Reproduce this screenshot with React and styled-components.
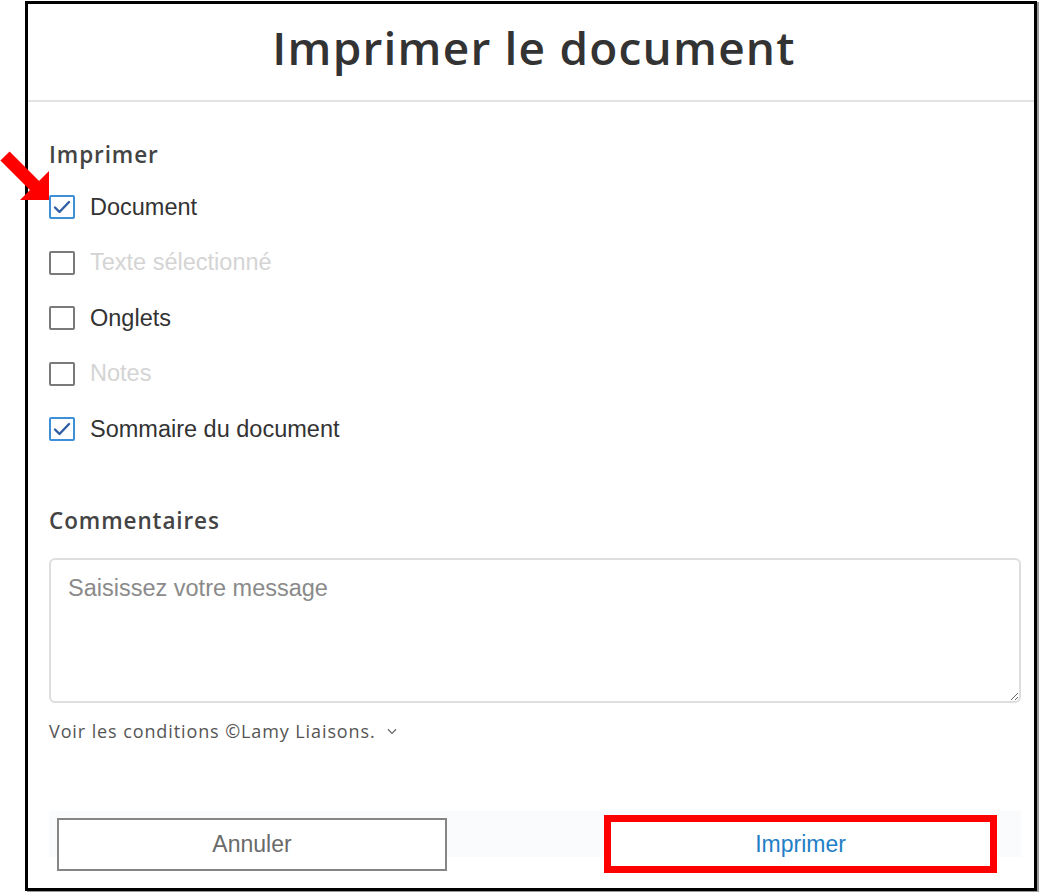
import React from "react";
import styled, { createGlobalStyle } from "styled-components";

const GlobalStyle = createGlobalStyle`
  html, body {
    margin: 0;
    padding: 0;
    background: #ffffff;
  }
  body {
    font-family: "Liberation Sans", Arial, sans-serif;
  }
`;

const Page = styled.div`
  position: relative;
  width: 1039px;
  height: 892px;
  padding: 1px 0 0 25px;
  box-sizing: border-box;
`;

const Frame = styled.div`
  width: 1012px;
  height: 890px;
  box-sizing: border-box;
  border: 3px solid #000;
  box-shadow: 2px 1px 0 #9a9a9a;
  display: flex;
  flex-direction: column;
  background: #fff;
`;

const Header = styled.div`
  height: 96px;
  border-bottom: 2px solid #e3e3e3;
  display: flex;
  align-items: center;
  justify-content: center;
`;

const Title = styled.h1`
  margin: -10px 0 0 6px;
  font-family: "Open Sans", "Noto Sans", sans-serif;
  font-weight: 600;
  font-size: 46px;
  color: #333;
  letter-spacing: 1.2px;
`;

const Body = styled.div`
  flex: 1;
  padding: 39px 13px 15px 21px;
  display: flex;
  flex-direction: column;
`;

const SectionLabel = styled.div`
  font-family: "Open Sans", "Noto Sans", sans-serif;
  font-weight: 600;
  font-size: 22.5px;
  line-height: 28px;
  letter-spacing: 0.9px;
  color: #444;
  margin-top: ${(p) => p.$top || 0}px;
`;

const Options = styled.div`
  margin-top: 11px;
  display: flex;
  flex-direction: column;
`;

const Row = styled.label`
  height: 55.5px;
  display: flex;
  align-items: center;
  gap: 15px;
`;

const Box = styled.span`
  width: 26px;
  height: 24px;
  box-sizing: border-box;
  border: 2px solid ${(p) => (p.$checked ? "#3d8fd8" : "#7a7a7a")};
  border-radius: 2px;
  display: flex;
  align-items: center;
  justify-content: center;
  flex-shrink: 0;
`;

const OptionText = styled.span`
  font-size: 23.5px;
  color: ${(p) => (p.$disabled ? "#d4d4d4" : "#333")};
  margin-top: 0;
`;

const Comment = styled.textarea`
  margin-top: 23px;
  height: 145px;
  box-sizing: border-box;
  border: 2px solid #dedede;
  border-radius: 6px;
  padding: 15px 17px;
  font-family: "Liberation Sans", Arial, sans-serif;
  font-size: 23.5px;
  color: #333;
  resize: vertical;
  outline: none;
  &::placeholder {
    color: #8a8a8a;
  }
`;

const Terms = styled.div`
  margin-top: 17px;
  display: flex;
  align-items: center;
  gap: 9px;
  font-family: "Open Sans", "Noto Sans", sans-serif;
  font-size: 18px;
  line-height: 22px;
  letter-spacing: 0.9px;
  color: #555;
`;

const Footer = styled.div`
  margin-top: 69px;
  padding: 4px 0 0 8px;
  height: 58px;
  display: flex;
  align-items: center;
  gap: 157px;
  background: linear-gradient(#f9fbfc 0, #f9fbfc 46px, #fff 46px);
`;

const Button = styled.button`
  width: ${(p) => (p.$primary ? 393 : 390)}px;
  height: ${(p) => (p.$primary ? 58 : 53)}px;
  box-sizing: border-box;
  background: #fff;
  border: ${(p) => (p.$primary ? "7px solid #ff0000" : "2px solid #858585")};
  font-family: "Liberation Sans", Arial, sans-serif;
  font-size: 23px;
  color: ${(p) => (p.$primary ? "#1f7fc6" : "#6a6a6a")};
  cursor: pointer;
`;

const Arrow = styled.svg`
  position: absolute;
  left: 0;
  top: 150px;
`;

const Check = () => (
  <svg width="18" height="14" viewBox="0 0 18 14">
    <path
      d="M2 7.5 L6.5 12 L16 2"
      fill="none"
      stroke="#2e5fa6"
      strokeWidth="2.4"
      strokeLinecap="round"
      strokeLinejoin="round"
    />
  </svg>
);

const options = [
  { label: "Document", checked: true },
  { label: "Texte sélectionné", disabled: true },
  { label: "Onglets" },
  { label: "Notes", disabled: true },
  { label: "Sommaire du document", checked: true },
];

const App = () => {
  return (
    <Page>
      <GlobalStyle />
      <Frame>
        <Header>
          <Title>Imprimer le document</Title>
        </Header>
        <Body>
          <SectionLabel>Imprimer</SectionLabel>
          <Options>
            {options.map((o) => (
              <Row key={o.label}>
                <Box $checked={o.checked}>{o.checked && <Check />}</Box>
                <OptionText $disabled={o.disabled}>{o.label}</OptionText>
              </Row>
            ))}
          </Options>
          <SectionLabel $top={50}>Commentaires</SectionLabel>
          <Comment placeholder="Saisissez votre message" />
          <Terms>
            Voir les conditions ©Lamy Liaisons.
            <svg width="14" height="14" viewBox="0 0 24 24">
              <path d="M5 9l7 7 7-7" fill="none" stroke="#666" strokeWidth="2" />
            </svg>
          </Terms>
          <Footer>
            <Button>Annuler</Button>
            <Button $primary>Imprimer</Button>
          </Footer>
        </Body>
      </Frame>
      <Arrow width="52" height="52" viewBox="0 0 52 52">
        <polygon points="9.6,1.4 39.6,31.4 30.4,40.6 0.4,10.6" fill="#ff0000" />
        <polygon points="49,21 49,50 20,50" fill="#ff0000" />
      </Arrow>
    </Page>
  );
};

export default App;
